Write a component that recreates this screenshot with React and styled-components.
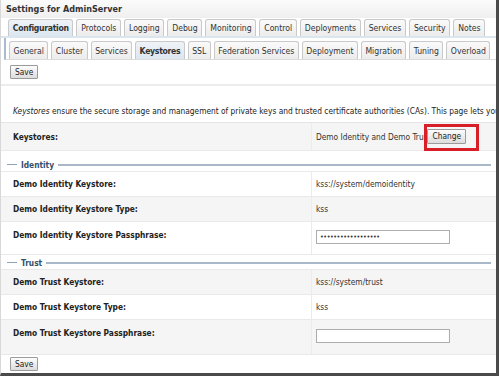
import React from "react";
import styled, { createGlobalStyle } from "styled-components";

const Global = createGlobalStyle`
  html, body { margin: 0; padding: 0; background: #ffffff; }
  body { font-family: "DejaVu Sans Condensed", "DejaVu Sans", sans-serif; font-size: 8.3px; color: #222; }
  * { box-sizing: border-box; }
`;

const Frame = styled.div`
  position: relative;
  width: 499px;
  height: 376px;
  border-left: 1px solid #d8d8d8;
  border-right: 3px solid #4a4a4a;
  border-bottom: 3px solid #4a4a4a;
  background: #fff;
  overflow: hidden;
  display: flex;
  flex-direction: column;
`;

const Header = styled.div`
  flex: none;
  height: 18px;
  padding: 0 5px;
  display: flex;
  align-items: center;
  font-weight: bold;
  font-size: 9px;
  color: #333;
  background: linear-gradient(#fbfbfb, #efefef);
`;

const TabRow = styled.div`
  flex: none;
  display: flex;
  align-items: flex-end;
  gap: 3px;
  padding-left: ${(p) => p.$indent}px;
  height: ${(p) => p.$h}px;
  background: #fff;
  border-bottom: ${(p) => p.$lw}px solid ${(p) => p.$line};
  border-left: ${(p) => (p.$left ? "2px solid #a9bccf" : "none")};
  margin-left: ${(p) => (p.$left ? "3px" : "0")};
`;

const Tab = styled.div`
  height: ${(p) => p.$h}px;
  padding: 0 ${(p) => p.$pad}px;
  display: flex;
  align-items: center;
  border: 1px solid #c9c9c9;
  border-bottom: none;
  border-radius: 3px 3px 0 0;
  font-size: 8.6px;
  font-weight: ${(p) => (p.$active ? "bold" : "normal")};
  letter-spacing: ${(p) => (p.$active ? "-0.3px" : "0")};
  background: ${(p) =>
    p.$active ? "linear-gradient(#eef3f8, #dce6ef)" : "linear-gradient(#fafafa, #ececec)"};
  color: #333;
  white-space: nowrap;
`;

const ButtonBar = styled.div`
  flex: none;
  height: ${(p) => p.$h}px;
  padding: 0 9px;
  display: flex;
  align-items: center;
  border-bottom: ${(p) => (p.$line ? "2px solid #ececec" : "none")};
`;

const Btn = styled.button`
  font-family: inherit;
  font-size: 8.3px;
  height: 14px;
  padding: 0 4px;
  border: 1px solid #9a9a9a;
  border-radius: 1px;
  background: linear-gradient(#fdfdfd, #dcdcdc);
  color: #222;
  line-height: 1;
`;

const Desc = styled.div`
  flex: none;
  height: 37px;
  padding: 0 12px 6px;
  display: flex;
  align-items: flex-end;
  white-space: nowrap;
  border-bottom: 1px solid #e4e4e4;
  em { font-style: italic; }
`;

const Row = styled.div`
  flex: none;
  position: relative;
  display: grid;
  grid-template-columns: 311px 1fr;
  height: ${(p) => p.$h}px;
  background: ${(p) => (p.$shade ? "#f5f5f5" : "#fff")};
  border-bottom: 1px solid #e9e9e9;
`;

const Label = styled.div`
  display: flex;
  align-items: ${(p) => (p.$pt != null ? "flex-start" : "center")};
  padding: ${(p) => p.$pt || 0}px 12px 0;
  font-weight: bold;
  color: #222;
  border-right: 1px solid #ebebeb;
`;

const Value = styled.div`
  display: flex;
  align-items: ${(p) => (p.$pt != null ? "flex-start" : "center")};
  justify-content: ${(p) => (p.$end ? "flex-end" : "flex-start")};
  padding: ${(p) => p.$pt || 0}px 4px 0 4px;
  white-space: nowrap;
  color: #333;
`;

const Legend = styled.div`
  flex: none;
  display: flex;
  align-items: center;
  gap: 4px;
  height: ${(p) => p.$h}px;
  padding: ${(p) => p.$pt}px 5px 0 6px;
  font-weight: bold;
  color: #36506b;
  border-bottom: 1px solid #e9e9e9;
  &::before {
    content: "";
    width: 10px;
    height: 1px;
    background: #8ea4ba;
  }
  &::after {
    content: "";
    flex: 1;
    height: 2px;
    background: #a9b8c8;
  }
`;

const Input = styled.div`
  width: 134px;
  height: 14px;
  border: 1px solid #adadad;
  background: #fff;
  display: flex;
  align-items: center;
  padding-left: 3px;
  font-size: 7px;
  letter-spacing: -0.4px;
  color: #333;
`;

const Highlight = styled.div`
  position: absolute;
  left: 423px;
  top: 1px;
  width: 55px;
  height: 27px;
  border: 3px solid #d81e26;
  pointer-events: none;
`;

const ChangeBtn = styled(Btn)`
  margin-left: -3px;
  margin-right: 28px;
  height: 15px;
  position: relative;
  z-index: 1;
`;

const top = ["Configuration", "Protocols", "Logging", "Debug", "Monitoring", "Control", "Deployments", "Services", "Security", "Notes"];
const sub = ["General", "Cluster", "Services", "Keystores", "SSL", "Federation Services", "Deployment", "Migration", "Tuning", "Overload"];

export default function App() {
  return (
    <>
      <Global />
      <Frame>
        <Header>Settings for AdminServer</Header>
        <TabRow $indent={7} $h={20} $lw={2} $line="#dbe5ee">
          {top.map((t) => (
            <Tab key={t} $h={17} $pad={3.8} $active={t === "Configuration"}>{t}</Tab>
          ))}
        </TabRow>
        <TabRow $indent={3} $h={22} $lw={1} $line="#dcdcdc" $left>
          {sub.map((t) => (
            <Tab key={t} $h={18} $pad={3.45} $active={t === "Keystores"}>{t}</Tab>
          ))}
        </TabRow>
        <ButtonBar $h={26} $line>
          <Btn>Save</Btn>
        </ButtonBar>
        <Desc>
          <span><em>Keystores</em> ensure the secure storage and management of private keys and trusted certificate authorities (CAs). This page lets you view and define various keystore configurations.</span>
        </Desc>
        <Row $h={28} $shade>
          <Label>Keystores:</Label>
          <Value $end>
            Demo Identity and Demo Trust
            <ChangeBtn>Change</ChangeBtn>
          </Value>
          <Highlight />
        </Row>
        <Legend $h={21} $pt={7}>Identity</Legend>
        <Row $h={25}>
          <Label>Demo Identity Keystore:</Label>
          <Value>kss://system/demoidentity</Value>
        </Row>
        <Row $h={25} $shade>
          <Label>Demo Identity Keystore Type:</Label>
          <Value>kss</Value>
        </Row>
        <Row $h={33}>
          <Label $pt={8}>Demo Identity Keystore Passphrase:</Label>
          <Value $pt={8}><Input>••••••••••••••••••</Input></Value>
        </Row>
        <Legend $h={15} $pt={1}>Trust</Legend>
        <Row $h={25} $shade>
          <Label>Demo Trust Keystore:</Label>
          <Value>kss://system/trust</Value>
        </Row>
        <Row $h={25}>
          <Label>Demo Trust Keystore Type:</Label>
          <Value>kss</Value>
        </Row>
        <Row $h={35} $shade>
          <Label $pt={8}>Demo Trust Keystore Passphrase:</Label>
          <Value $pt={9}><Input /></Value>
        </Row>
        <ButtonBar $h={18}>
          <Btn>Save</Btn>
        </ButtonBar>
      </Frame>
    </>
  );
}
